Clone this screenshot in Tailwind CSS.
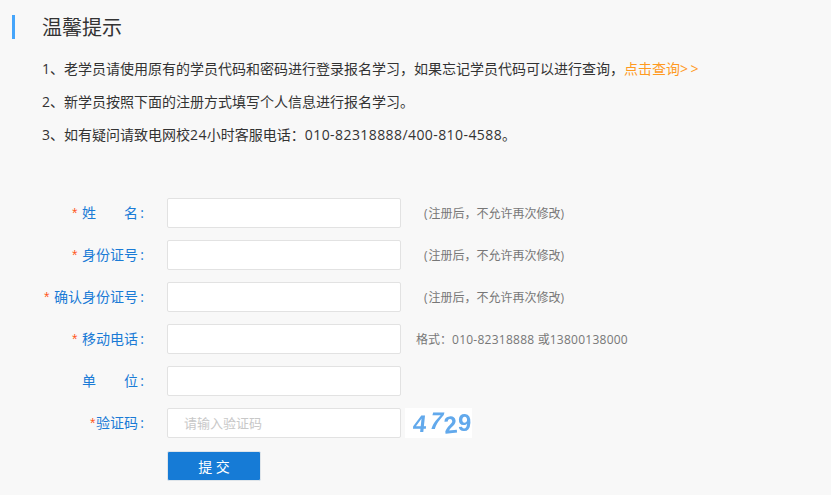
<!doctype html>
<html lang="zh-CN">
<head>
<meta charset="utf-8">
<script src="https://cdn.jsdelivr.net/npm/@tailwindcss/browser@4"></script>
</head>
<body class="m-0 bg-[#f8f8f8]">
<div class="w-[831px] h-[495px] overflow-hidden bg-[#f8f8f8] font-['Open_Sans','Noto_Sans_CJK_SC',sans-serif] text-[#333]">
  <div class="pt-[15px] pl-[12px] flex items-center h-[39px]">
    <div class="w-[3px] h-[24px] bg-[#45a5fb]"></div>
    <h2 class="ml-[27px] pt-[2px] text-[20px] leading-[24px] font-normal text-[#333]">温馨提示</h2>
  </div>
  <div class="pl-[42px] pt-[13px] text-[14px] leading-[33px] text-[#333]">
    <p>1、老学员请使用原有的学员代码和密码进行登录报名学习，如果忘记学员代码可以进行查询，<a class="text-[#ff9a1f]">点击查询<span class="tracking-[2.5px]">&gt;&gt;</span></a></p>
    <p>2、新学员按照下面的注册方式填写个人信息进行报名学习。</p>
    <p>3、如有疑问请致电网校<span class="tracking-[0.4px]">24</span>小时客服电话：<span class="tracking-[0.42px]">010-82318888/400-810-4588</span>。</p>
  </div>
  <form class="mt-[47px] flex flex-col gap-[12px] text-[14px] leading-[30px]">
    <div class="flex h-[30px]">
      <label class="w-[144px] flex justify-end text-[#1a7bd6]"><span class="font-['Liberation_Sans',sans-serif] text-[#ff5a1f] w-[6px] mr-[4px]">*</span><span class="w-[56px] flex justify-between"><span>姓</span><span>名</span></span><span class="w-[6px] text-right">:</span></label>
      <input class="ml-[23px] w-[234px] h-[30px] bg-white border border-[#e2e2e2] rounded-[2px]">
      <span class="ml-[23px] text-[12px] leading-[32px] text-[#777]"><span class="tracking-[1px]">(</span>注册后，不允许再次修改<span class="tracking-[1px]">)</span></span>
    </div>
    <div class="flex h-[30px]">
      <label class="w-[144px] flex justify-end text-[#1a7bd6]"><span class="font-['Liberation_Sans',sans-serif] text-[#ff5a1f] w-[6px] mr-[4px]">*</span><span>身份证号</span><span class="w-[6px] text-right">:</span></label>
      <input class="ml-[23px] w-[234px] h-[30px] bg-white border border-[#e2e2e2] rounded-[2px]">
      <span class="ml-[23px] text-[12px] leading-[32px] text-[#777]"><span class="tracking-[1px]">(</span>注册后，不允许再次修改<span class="tracking-[1px]">)</span></span>
    </div>
    <div class="flex h-[30px]">
      <label class="w-[144px] flex justify-end text-[#1a7bd6]"><span class="font-['Liberation_Sans',sans-serif] text-[#ff5a1f] w-[6px] mr-[4px]">*</span><span>确认身份证号</span><span class="w-[6px] text-right">:</span></label>
      <input class="ml-[23px] w-[234px] h-[30px] bg-white border border-[#e2e2e2] rounded-[2px]">
      <span class="ml-[23px] text-[12px] leading-[32px] text-[#777]"><span class="tracking-[1px]">(</span>注册后，不允许再次修改<span class="tracking-[1px]">)</span></span>
    </div>
    <div class="flex h-[30px]">
      <label class="w-[144px] flex justify-end text-[#1a7bd6]"><span class="font-['Liberation_Sans',sans-serif] text-[#ff5a1f] w-[6px] mr-[4px]">*</span><span>移动电话</span><span class="w-[6px] text-right">:</span></label>
      <input class="ml-[23px] w-[234px] h-[30px] bg-white border border-[#e2e2e2] rounded-[2px]">
      <span class="ml-[15px] text-[12px] leading-[32px] text-[#777]">格式：<span class="tracking-[0.25px]">010-82318888 </span>或<span class="tracking-[0.25px]">13800138000</span></span>
    </div>
    <div class="flex h-[30px]">
      <label class="w-[144px] flex justify-end text-[#1a7bd6]"><span class="w-[56px] flex justify-between"><span>单</span><span>位</span></span><span class="w-[6px] text-right">:</span></label>
      <input class="ml-[23px] w-[234px] h-[30px] bg-white border border-[#e2e2e2] rounded-[2px]">
    </div>
    <div class="flex h-[30px]">
      <label class="w-[144px] flex justify-end text-[#1a7bd6]"><span class="font-['Liberation_Sans',sans-serif] text-[#ff5a1f] w-[6px]">*</span><span>验证码</span><span class="w-[6px] text-right">:</span></label>
      <input placeholder="请输入验证码" class="ml-[23px] w-[234px] h-[30px] pl-[16px] text-[13px] bg-white border border-[#e2e2e2] rounded-[2px] placeholder:text-[#c8c8c8]">
      <div class="ml-[4px] w-[67px] h-[30px] pl-[8px] bg-white flex items-center font-['Liberation_Sans',sans-serif] font-bold text-[24px] leading-[30px] text-[#62a9ec] blur-[0.7px]">
        <span class="w-[17px] -skew-x-6 translate-y-[1px]">4</span><span class="w-[14px] skew-x-[-14deg] -translate-y-[2px]">7</span><span class="w-[14px] -rotate-6 translate-y-[2px]">2</span><span class="w-[14px] rotate-3">9</span>
      </div>
    </div>
    <div class="flex h-[30px] mt-[1px]">
      <button type="button" class="ml-[167px] w-[94px] h-[30px] bg-[#167bd6] border border-[#dfe5ea] rounded-[2px] text-white text-[14px]">提 交</button>
    </div>
  </form>
</div>
</body>
</html>
